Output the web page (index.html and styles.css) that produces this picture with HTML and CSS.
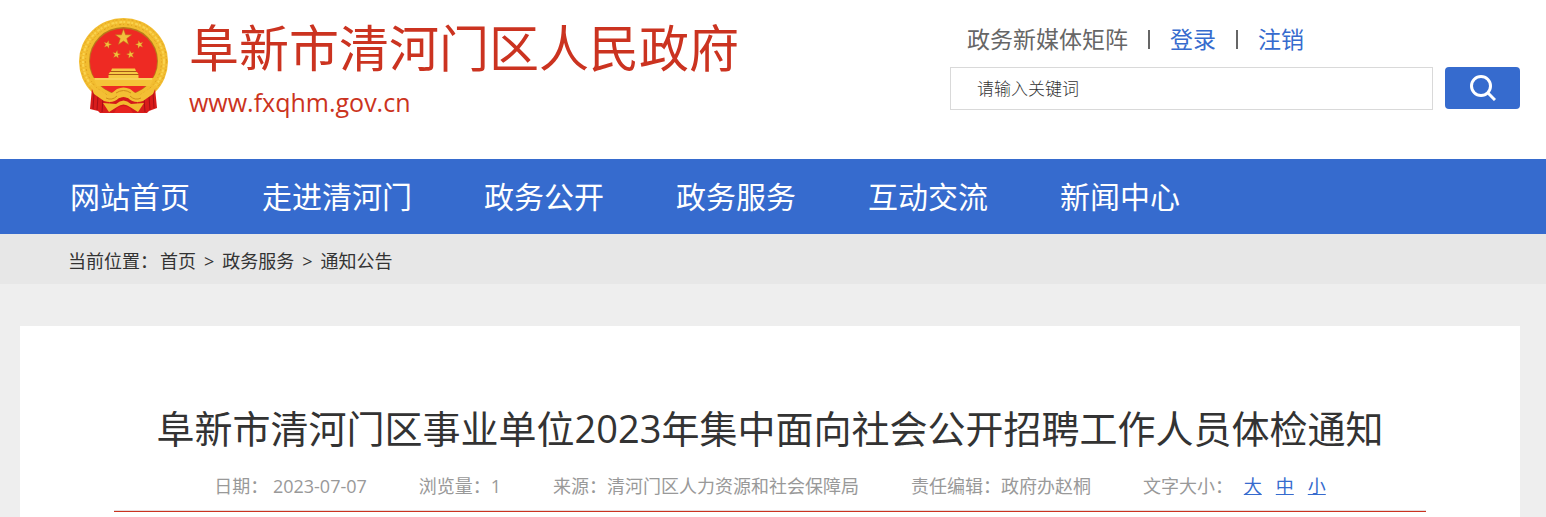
FILE: index.html
```
<!DOCTYPE html>
<html lang="zh-CN">
<head>
    <meta charset="UTF-8">
    <meta name="viewport" content="width=device-width, initial-scale=1.0">
    <title>阜新市清河门区人民政府</title>
    <link rel="stylesheet" href="styles.css">
</head>
<body>

    <header class="header">
        <div class="brand">
            <svg class="emblem" viewBox="0 0 90 96" aria-hidden="true">
                <defs>
                    <path id="star" d="M0-10 2.4-3.1 9.5-3.1 3.8 1.2 5.9 8.1 0 4-5.9 8.1-3.8 1.2-9.5-3.1-2.4-3.1z"/>
                </defs>
                <!-- wreath -->
                <ellipse cx="44.500" cy="43.500" rx="44.500" ry="43.500" fill="#f2bd30"/>
                <ellipse cx="44.500" cy="43.500" rx="43" ry="42" fill="none" stroke="#e2a420" stroke-width="1" stroke-dasharray="2 3 1 2"/>
                <ellipse cx="44.500" cy="43.500" rx="40.500" ry="39.500" fill="none" stroke="#fad34f" stroke-width="2" stroke-dasharray="3 1 2 2"/>
                <ellipse cx="44.500" cy="43.500" rx="38" ry="37" fill="none" stroke="#dd9f20" stroke-width="1" stroke-dasharray="1 3 2 2"/>
                <ellipse cx="44.500" cy="43" rx="34.500" ry="34" fill="#b9791a"/>
                <ellipse cx="44.500" cy="43.500" rx="33.500" ry="33" fill="#ee2a23"/>
                <!-- stars -->
                <g fill="#f3c03c" stroke="#b9711a" stroke-width=".6">
                    <use href="#star" transform="translate(44.500 19.500) scale(.86)"/>
                    <use href="#star" transform="translate(28.500 26.500) rotate(15) scale(.42)"/>
                    <use href="#star" transform="translate(60.500 26.500) rotate(-15) scale(.42)"/>
                    <use href="#star" transform="translate(37.500 36.500) rotate(10) scale(.42)"/>
                    <use href="#star" transform="translate(51.500 36.500) rotate(-10) scale(.42)"/>
                </g>
                <!-- gate tower -->
                <path d="M33 50.500h23l1 2.500H32zM31 54h27l1.500 2H29.500zM29.500 57h30v4h-30z" fill="#f6c945"/>
                <path d="M32 53.500h25M29.500 56.500h30" stroke="#a85a16" stroke-width="1"/>
                <path d="M14 60h61l-4 8H18z" fill="#f5c338"/>
                <path d="M16 61h57" stroke="#fbe07a" stroke-width="1"/>
                <!-- ribbons -->
                <path d="M13 70 30 82 33 95 21 95 19 93 11 91z" fill="#d91c1b"/>
                <path d="M76 70 59 82 56 95 68 95 70 93 78 90z" fill="#d91c1b"/>
                <path d="M15 75 14 91M19 78 18 92M24 80 23 94M74 75 75 90M70 78 71 92M65 80 66 94" stroke="#a60f16" stroke-width="1"/>
                <path d="M30 82 44.500 79 59 82 57 95 32 95z" fill="#d3191a"/>
                <!-- knot and gear -->
                <path d="M11 66 25 75 29 78 38 71Q44.500 68 51 71L60 78 64 75 78 66 74 76 64 83Q55 86 49 80L44.500 78 40 80Q34 86 25 83L15 76z" fill="#f3bf34"/>
                <path d="M37 75q7.500-5 15 0M27 80q6 3 11-2M62 80q-6 3-11-2" fill="none" stroke="#cf8d1a" stroke-width="1"/>
                <path d="M24 85 37 86Q44.500 79 52 86L65 85 59 94 51 89Q44.500 84 38 89L30 94z" fill="#f1bb2e"/>
                <path d="M38 90Q44.500 86 51 90L54 95H35z" fill="#e7231f"/>
            </svg>
            <div class="brand-text">
                <p class="site-name">阜新市清河门区人民政府</p>
                <p class="site-url">www.fxqhm.gov.cn</p>
            </div>
        </div>
        <div class="tools">
            <div class="top-links">
                <a class="media" href="#">政务新媒体矩阵</a>
                <span class="sep"></span>
                <a href="#">登录</a>
                <span class="sep"></span>
                <a href="#">注销</a>
            </div>
            <form class="search">
                <input class="search-input" type="text" placeholder="请输入关键词" aria-label="请输入关键词">
                <button class="search-btn" type="submit" aria-label="搜索">
                    <svg class="search-icon" viewBox="0 0 26 26" aria-hidden="true">
                        <circle cx="11" cy="11" r="9.500"/>
                        <path d="M18 18l7 7"/>
                    </svg>
                </button>
            </form>
        </div>
    </header>

    <nav class="nav">
        <a href="#">网站首页</a>
        <a href="#">走进清河门</a>
        <a href="#">政务公开</a>
        <a href="#">政务服务</a>
        <a href="#">互动交流</a>
        <a href="#">新闻中心</a>
    </nav>

    <div class="crumbs">
        <span class="crumbs-label">当前位置：</span>
        <a href="#">首页</a>
        <span>&gt;</span>
        <a href="#">政务服务</a>
        <span>&gt;</span>
        <a href="#">通知公告</a>
    </div>

    <main class="article">
        <h1>阜新市清河门区事业单位2023年集中面向社会公开招聘工作人员体检通知</h1>
        <div class="meta">
            <span>日期： 2023-07-07</span>
            <span>浏览量：1</span>
            <span>来源：清河门区人力资源和社会保障局</span>
            <span>责任编辑：政府办赵桐</span>
            <span class="sizes">文字大小： <a href="#">大</a><a href="#">中</a><a href="#">小</a></span>
        </div>
    </main>

</body>
</html>
```
FILE: styles.css
```
* { box-sizing: border-box; }
body { margin: 0; background: #eee; color: #333; font-family: "Open Sans", "Noto Sans CJK SC", sans-serif; }
p, h1 { margin: 0; font-weight: normal; }
a { color: inherit; text-decoration: none; }

.header { display: flex; justify-content: space-between; align-items: flex-start; height: 159px; padding: 18px 26px 0 79px; background: #fff; }
.brand { display: flex; gap: 20px; color: #cb3320; }
.emblem { width: 90px; height: 96px; }
.site-name { font-size: 50px; line-height: 60px; white-space: nowrap; }
.site-url { font-size: 25px; line-height: 48px; }

.tools { width: 570px; }
.top-links { display: flex; align-items: center; gap: 20px; padding-left: 17px; font-size: 23px; line-height: 42px; color: #366bce; }
.top-links .media { color: #666; }
.sep { width: 2px; height: 19px; background: #666; }
.search { display: flex; align-items: flex-start; gap: 12px; margin-top: 7px; }
.search-input { flex: 1; min-width: 0; height: 43px; padding: 0 26px; border: 1px solid #d9d9d9; background: #fff; font-family: "Open Sans", "Noto Sans CJK SC", sans-serif; font-size: 17px; font-weight: 300; color: #333; }
.search-input::placeholder { color: #333; opacity: 1; }
.search-btn { display: flex; align-items: center; justify-content: center; width: 75px; height: 42px; padding: 0; border: 0; border-radius: 4px; background: #366bce; cursor: pointer; }
.search-icon { width: 26px; height: 26px; fill: none; stroke: #fff; stroke-width: 3; }

.nav { display: flex; gap: 72px; padding-left: 70px; background: #366bce; color: #fff; font-size: 30px; line-height: 75px; white-space: nowrap; }

.crumbs { display: flex; gap: 8px; padding: 4px 0 0 68px; background: #e7e7e7; font-size: 18px; line-height: 46px; }
.crumbs-label { margin-right: -6px; }

.article { margin: 42px 26px 0 20px; padding: 72px 94px 5px; background: #fff; }
.article h1 { font-size: 38px; line-height: 60px; text-align: center; white-space: nowrap; }
.meta { display: flex; justify-content: center; gap: 52px; padding-top: 4px; border-bottom: 1px solid #cb3320; box-shadow: inset 0 -1px #e3dcdb; color: #999; font-size: 18px; line-height: 49px; white-space: nowrap; }
.sizes a { margin-left: 14px; color: #366bce; text-decoration: underline; }
.sizes a:first-child { margin-left: 6px; }
```
